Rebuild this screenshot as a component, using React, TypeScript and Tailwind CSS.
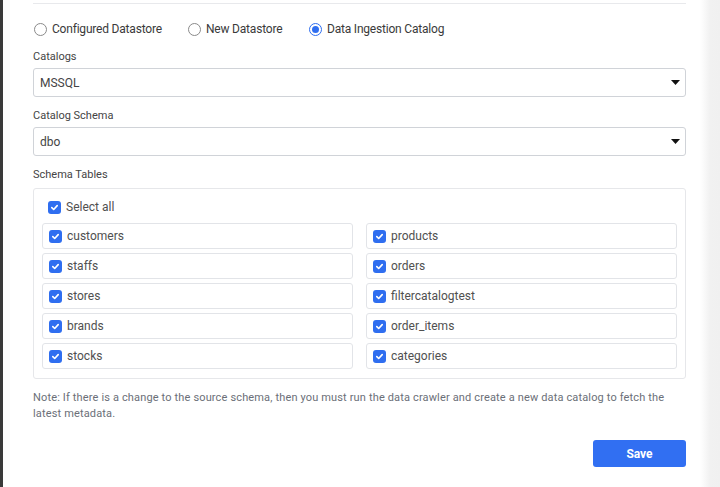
import React from "react";

const Check = () => (
  <span className="flex h-[13px] w-[13px] shrink-0 items-center justify-center rounded-[3px] bg-[#2f6ef0]">
    <svg width="9" height="9" viewBox="0 0 10 10" fill="none">
      <path d="M2 5.2 L4.1 7.2 L8 2.9" stroke="white" strokeWidth="1.8" strokeLinecap="round" strokeLinejoin="round" />
    </svg>
  </span>
);

const Radio = ({ checked, label }: { checked?: boolean; label: string }) => (
  <div className="flex items-center gap-[5px]">
    <span
      className={
        checked
          ? "flex h-[13px] w-[13px] items-center justify-center rounded-full border border-[#2f6ef0] bg-white"
          : "h-[13px] w-[13px] rounded-full border border-[#8a8a8a] bg-white"
      }
    >
      {checked && <span className="h-[7px] w-[7px] rounded-full bg-[#2f6ef0]" />}
    </span>
    <span className="text-[12px] tracking-[-0.2px] text-[#3a3a3a]">{label}</span>
  </div>
);

const Select = ({ value }: { value: string }) => (
  <div className="mt-[3px] flex h-[29px] items-center justify-between rounded-[3px] border border-[#d0d3d8] pl-[6px] pr-[5px]">
    <span className="text-[12px] text-[#444]">{value}</span>
    <svg width="9" height="5" viewBox="0 0 9 5">
      <path d="M0 0 H9 L4.5 5 Z" fill="#111" />
    </svg>
  </div>
);

const left = ["customers", "staffs", "stores", "brands", "stocks"];
const right = ["products", "orders", "filtercatalogtest", "order_items", "categories"];

const Item = ({ name }: { name: string }) => (
  <div className="flex h-[26px] items-start gap-[5px] rounded-[3px] border border-[#e2e4e8] pl-[6px] pt-[6px]">
    <Check />
    <span className="-mt-[2px] text-[12px] leading-[16px] text-[#505050]">{name}</span>
  </div>
);

export default function App() {
  const rows = left.map((l, i) => [l, right[i]]);
  return (
    <div className="flex h-[487px] w-[720px] overflow-hidden bg-white" style={{ fontFamily: "Roboto, 'Noto Sans', sans-serif" }}>
      <div className="w-[3px] shrink-0 bg-[#3a3a3a]" />
      <div className="w-[697px] shrink-0 pl-[30px] pr-[14px]">
        <div className="h-[4px] border-b border-[#e8e9ec]" />
        <div className="mt-[15px] flex h-[20px] items-center">
          <div className="ml-[1px] w-[154px]">
            <Radio label="Configured Datastore" />
          </div>
          <div className="w-[121px]">
            <Radio label="New Datastore" />
          </div>
          <Radio checked label="Data Ingestion Catalog" />
        </div>
        <div className="mt-[10px] h-[16px] text-[11px] leading-[16px] text-[#444]">Catalogs</div>
        <Select value="MSSQL" />
        <div className="mt-[11px] h-[16px] text-[11px] leading-[16px] text-[#444]">Catalog Schema</div>
        <Select value="dbo" />
        <div className="mt-[11px] h-[16px] text-[11px] leading-[16px] text-[#444]">Schema Tables</div>
        <div className="mt-[5px] h-[191px] rounded-[3px] border border-[#e6e7ea] px-[8px]">
          <div className="mt-[8px] flex h-[20px] items-center gap-[5px] pl-[6px]">
            <Check />
            <span className="text-[12px] text-[#505050]">Select all</span>
          </div>
          <div className="mt-[6px] grid grid-cols-2 gap-x-[13px] gap-y-[4px]">
            {rows.map(([l, r]) => (
              <React.Fragment key={l}>
                <Item name={l} />
                <Item name={r} />
              </React.Fragment>
            ))}
          </div>
        </div>
        <p className="mt-[11px] text-[11px] leading-[16px] tracking-[0.15px] text-[#6b6f78]">
          Note: If there is a change to the source schema, then you must run the data crawler and create a new data catalog to fetch the latest metadata.
        </p>
        <div className="mt-[18px] flex justify-end">
          <button className="h-[27px] w-[93px] rounded-[3px] bg-[#316ff2] text-[12px] font-bold text-white">Save</button>
        </div>
      </div>
      <div className="flex-1 bg-gradient-to-r from-white via-[#f1f1f1] to-[#f0f0f0]" />
    </div>
  );
}
